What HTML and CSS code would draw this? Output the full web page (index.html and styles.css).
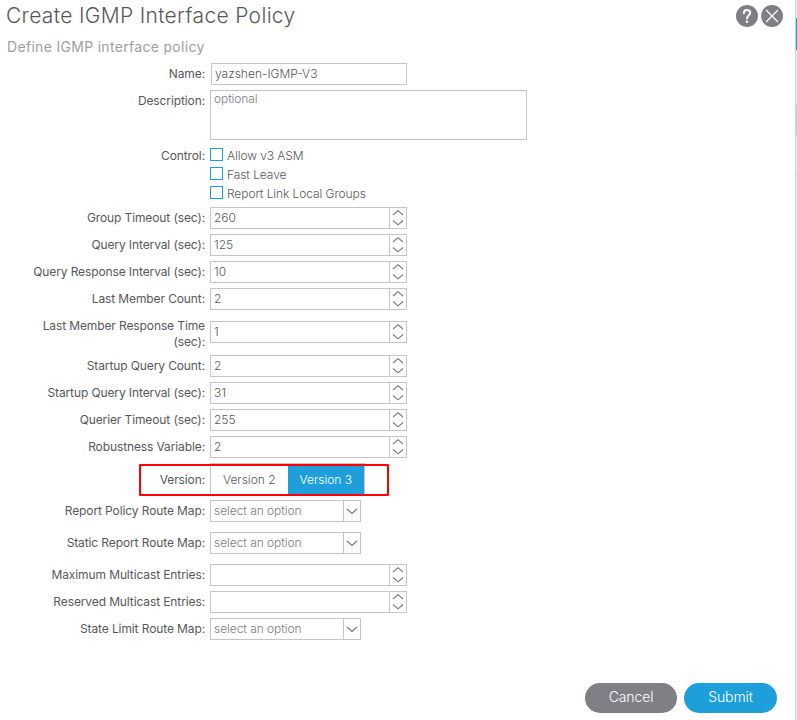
FILE: index.html
```html
<!DOCTYPE html>
<html lang="en">
<head>
<meta charset="utf-8">
<title>Create IGMP Interface Policy</title>
<link rel="stylesheet" href="styles.css">
</head>
<body>
<svg width="0" height="0" class="defs">
  <symbol id="spin" viewBox="0 0 16 20"><path d="M3 7L8 2.7L13 7M3 12.5L8 16.8L13 12.5"/></symbol>
  <symbol id="down" viewBox="0 0 16 20"><path d="M3 8L8 12.5L13 8"/></symbol>
</svg>
<div class="page">
<main class="dialog">
  <header class="head">
    <h1><span>Create IGMP Interface Policy</span></h1>
    <div class="tools">
      <svg width="22" height="22" viewBox="0 0 22 22"><circle cx="11" cy="11" r="11"/><path class="q" d="M7.8 8.2C7.8 3.8 14.2 4 14.2 7.8C14.2 10.3 11 10.2 11 13.6"/><circle class="dot" cx="11" cy="16.8" r="1.2"/></svg>
      <svg width="22" height="22" viewBox="0 0 22 22"><circle cx="11" cy="11" r="11"/><path class="x" d="M5.5 5.5L16.5 16.5M16.5 5.5L5.5 16.5"/></svg>
    </div>
  </header>
  <h2>Define IGMP interface policy</h2>
  <form class="form">
    <div class="row"><label>Name:</label><div class="field name"><span>yazshen-IGMP-V3</span></div></div>
    <div class="row desc"><label>Description:</label><div class="area"><span>optional</span></div></div>
    <div class="row control"><label>Control:</label>
      <div class="checks">
        <div class="check"><i></i><span>Allow v3 ASM</span></div>
        <div class="check"><i></i><span>Fast Leave</span></div>
        <div class="check"><i></i><span>Report Link Local Groups</span></div>
      </div>
    </div>
    <div class="row"><label>Group Timeout (sec):</label><div class="field"><span>260</span><svg class="arrow"><use href="#spin"/></svg></div></div>
    <div class="row"><label>Query Interval (sec):</label><div class="field"><span>125</span><svg class="arrow"><use href="#spin"/></svg></div></div>
    <div class="row"><label>Query Response Interval (sec):</label><div class="field"><span>10</span><svg class="arrow"><use href="#spin"/></svg></div></div>
    <div class="row"><label>Last Member Count:</label><div class="field"><span>2</span><svg class="arrow"><use href="#spin"/></svg></div></div>
    <div class="row tall"><label>Last Member Response Time<br>(sec):</label><div class="field"><span>1</span><svg class="arrow"><use href="#spin"/></svg></div></div>
    <div class="row"><label>Startup Query Count:</label><div class="field"><span>2</span><svg class="arrow"><use href="#spin"/></svg></div></div>
    <div class="row"><label>Startup Query Interval (sec):</label><div class="field"><span>31</span><svg class="arrow"><use href="#spin"/></svg></div></div>
    <div class="row"><label>Querier Timeout (sec):</label><div class="field"><span>255</span><svg class="arrow"><use href="#spin"/></svg></div></div>
    <div class="row"><label>Robustness Variable:</label><div class="field"><span>2</span><svg class="arrow"><use href="#spin"/></svg></div></div>
    <div class="row version"><label>Version:</label><div class="toggle"><span>Version 2</span><span class="on">Version 3</span></div><div class="highlight"></div></div>
    <div class="row"><label>Report Policy Route Map:</label><div class="field select"><span>select an option</span><svg class="arrow"><use href="#down"/></svg></div></div>
    <div class="row spaced"><label>Static Report Route Map:</label><div class="field select"><span>select an option</span><svg class="arrow"><use href="#down"/></svg></div></div>
    <div class="row spaced"><label>Maximum Multicast Entries:</label><div class="field"><span></span><svg class="arrow"><use href="#spin"/></svg></div></div>
    <div class="row"><label>Reserved Multicast Entries:</label><div class="field"><span></span><svg class="arrow"><use href="#spin"/></svg></div></div>
    <div class="row"><label>State Limit Route Map:</label><div class="field select"><span>select an option</span><svg class="arrow"><use href="#down"/></svg></div></div>
  </form>
  <footer class="actions"><div class="btn cancel">Cancel</div><div class="btn submit">Submit</div></footer>
</main>
<aside class="behind"><div class="tab"></div><div class="bar"></div><div class="line"></div></aside>
</div>
</body>
</html>
```
FILE: styles.css
```css
* { box-sizing: border-box; }
body { margin: 0; background: #fff; font: 300 12px/16px Inter, "Liberation Sans", sans-serif; color: #58585b; overflow: hidden; }
.defs { position: absolute; }
.page { display: flex; height: 720px; }
.dialog { width: 795px; display: flex; flex-direction: column; }
.head { display: flex; justify-content: space-between; height: 37px; padding: 2px 12px 0 6px; }
h1 { margin: 0; font-size: 21px; line-height: 27px; font-weight: 300; letter-spacing: 0.33px; }
h2 { margin: 0 0 0 7px; font-size: 14px; line-height: 20px; height: 26px; font-weight: 400; color: #9e9ea2; letter-spacing: 0.31px; }
.tools { display: flex; gap: 3px; padding-top: 3px; }
.tools circle { fill: #7f8086; }
.tools path { fill: none; stroke: #fff; stroke-width: 1.3; stroke-linecap: round; }
.tools .q { stroke-width: 2; }
.tools .dot { fill: #fff; }
.form { display: flex; flex-direction: column; gap: 5px; }
.row { display: flex; gap: 5px; min-height: 22px; }
label { width: 205px; padding-top: 3px; text-align: right; font-weight: 400; color: #58585b; white-space: nowrap; letter-spacing: -0.11px; }
.field { display: flex; width: 197px; height: 22px; border: 1px solid #c4c4c9; color: #58585c; line-height: 20px; }
.field span { flex: 1; padding-left: 3px; }
.name { width: 196px; margin-left: 1px; }
.arrow { width: 17px; height: 20px; border-left: 1px solid #c4c4c9; fill: none; stroke: #77777b; stroke-width: 1.1; }
.select { width: 151px; color: #7a7a7f; letter-spacing: -0.06px; }
.area { width: 317px; height: 50px; border: 1px solid #c4c4c9; padding: 0 3px; color: #7a7a7f; letter-spacing: -0.1px; }
.control { height: 57px; padding-top: 3px; }
.control label { padding-top: 0; }
.checks { display: flex; flex-direction: column; gap: 3px; letter-spacing: -0.08px; }
.check { display: flex; gap: 4px; height: 16px; }
.check i { width: 13px; height: 13px; border: 1px solid #1e9fda; }
.tall .field { margin-top: 6px; }
.version { position: relative; height: 32px; }
.version label { padding-top: 9px; }
.toggle { display: flex; width: 155px; height: 32px; border: 1px solid #c4c4c9; line-height: 32px; text-align: center; }
.toggle span { flex: 1; }
.toggle .on { background: #1e9fda; color: #fff; }
.highlight { position: absolute; left: 139px; top: 1px; width: 250px; height: 32px; border: 2px solid #ff0000; border-radius: 1px; }
.spaced { margin-top: 5px; }
.actions { display: flex; justify-content: flex-end; gap: 7px; padding: 0 18px 7px 0; margin-top: auto; }
.btn { height: 30px; border-radius: 15px; color: #fff; font-size: 14px; line-height: 28px; text-align: center; letter-spacing: -0.1px; }
.cancel { width: 92px; background: #7f8086; }
.submit { width: 93px; background: #1e9fda; }
.behind { width: 2px; border-left: 1px solid #cfcfd2; background: #efeff0; }
.tab { height: 32px; margin-top: 18px; background: #2a94c5; }
.bar { height: 30px; margin-top: 55px; background: #ccc; }
.line { height: 1px; margin-top: 40px; background: #ccc; }
```
